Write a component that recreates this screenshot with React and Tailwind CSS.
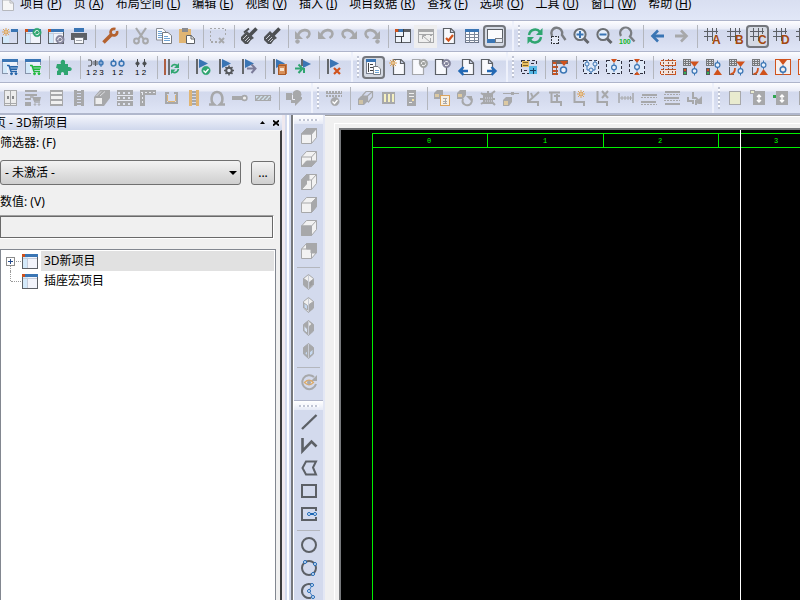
const GRAY = '#5c6066';
const DIM = '#a7a8aa';
const BLUE = '#3a75b4';
const ORANGE = '#d0521c';
const GREEN = '#2fa570';

// small drawing helpers, every icon sits on a 16x16 grid
const Box = ({ x, y, w, h, c = GRAY }) => (
  <rect x={x} y={y} width={w} height={h} fill={c} shapeRendering="crispEdges" />
);

const Frame = ({ x, y, w, h, c = GRAY, fill = 'none', dash, sw = 1 }) => (
  <rect
    x={x + sw / 2}
    y={y + sw / 2}
    width={w - sw}
    height={h - sw}
    fill={fill}
    stroke={c}
    strokeWidth={sw}
    strokeDasharray={dash}
    shapeRendering="crispEdges"
  />
);

const Line = ({ d, c = GRAY, w = 1, crisp, dash }) => (
  <path
    d={d}
    fill="none"
    stroke={c}
    strokeWidth={w}
    strokeDasharray={dash}
    shapeRendering={crisp ? 'crispEdges' : undefined}
  />
);

const Fill = ({ d, c = GRAY }) => <path d={d} fill={c} />;

const Ring = ({ x, y, r, c = GRAY, w = 1, fill = 'none' }) => (
  <circle cx={x} cy={y} r={r} fill={fill} stroke={c} strokeWidth={w} />
);

const Label = ({ x, y, size = 8, c = '#000', bold, children }) => (
  <text
    x={x}
    y={y}
    fontSize={size}
    fill={c}
    fontWeight={bold ? 700 : 400}
    fontFamily='"Liberation Sans", sans-serif'
  >
    {children}
  </text>
);

const Star = ({ x = 4, y = 4, c = '#dba45c' }) => (
  <g>
    <Line
      d={`M${x - 4} ${y}H${x + 4}M${x} ${y - 4}V${y + 4}M${x - 3} ${y - 3}L${x + 3} ${y + 3}M${x + 3} ${y - 3}L${x - 3} ${y + 3}`}
      c={c}
    />
    <Ring x={x} y={y} r={1.3} c={c} fill="#fff3dd" />
  </g>
);

const Badge = ({ x, y, c, children }) => (
  <g>
    <Ring x={x} y={y} r={4.2} c={c} fill={c} w={0.5} />
    {children || <Line d={`M${x - 2.2} ${y + 0.6}A2.2 2.2 0 0 1 ${x + 1.8} ${y - 1}M${x + 2.2} ${y}A2.2 2.2 0 0 1 ${x - 1.5} ${y + 1.6}`} c="#fff" />}
  </g>
);

const Win = ({ y = 1 }) => (
  <g>
    <Frame x={0} y={y} w={16} h={15 - y + 1} fill="#f2f4fb" />
    <Box x={1} y={y + 3} w={5} h={11 - y + 1} c="#d3e9fa" />
    <Box x={0} y={y} w={16} h={3} c={BLUE} />
    <Box x={0} y={y} w={3} h={3} c={ORANGE} />
    <Line d={`M5.5 ${y + 5}V15M1 ${y + 4.5}H15`} c="#c3cbda" crisp />
  </g>
);

const CartWin = ({ c }) => (
  <g>
    <Frame x={0} y={0} w={16} h={15} c="#8794ab" fill="#eef2fa" />
    <Box x={0} y={0} w={16} h={3} c={BLUE} />
    <Box x={1} y={4} w={4} h={10} c="#d3e9fa" />
    <Box x={6} y={6} w={10} h={10} c="#e4e9f7" />
    <Line d="M5 6.5H7L9 12.5H15" c={c} w={1.5} />
    <Fill d="M8 7H16L15 11H9Z" c={c} />
    <Line d="M10 8V10M12 8V10M14 8V10" c="#dceafa" w={0.7} />
    <Ring x={9.5} y={14.7} r={1} c={c} fill={c} />
    <Ring x={14} y={14.7} r={1} c={c} fill={c} />
  </g>
);

const Doc = ({ x = 3, c = GRAY }) => (
  <path
    d={`M${x + 0.5} 0.5H${x + 8}L${x + 11.5} 4V15.5H${x + 0.5}ZM${x + 7.5} 0.5V4.5H${x + 11.5}`}
    fill="#f8f9fd"
    stroke={c}
    strokeWidth="1.2"
  />
);

const Flag = () => (
  <g>
    <Box x={1} y={0} w={2} h={15} c="#65686c" />
    <Fill d="M4 0L13 4.5L4 9Z" c={BLUE} />
  </g>
);

const Brush = () => (
  <g>
    <Line d="M15.5 .5L9 7" c="#4a4d50" w={3.5} />
    <Fill d="M6 3L13 10L10 12L7 16H4L0 12V9Z" c="#505356" />
    <Line d="M2 11L6 7M4 13L8 9M6 14L9 11" c="#c9ccd2" />
  </g>
);

const Undo = ({ dot }) => (
  <g>
    <Line d="M3 8C4.5 .5 14.5 .5 14.5 6C14.5 8 13 9 11.5 10" c={DIM} w={2.6} />
    <Fill d="M0 3V11H8Z" c={DIM} />
    {dot && <Ring x={2.5} y={13.5} r={1.8} c={DIM} fill={DIM} />}
  </g>
);

const Flip = ({ children }) => <g transform="matrix(-1 0 0 1 16 0)">{children}</g>;

const Lens = ({ children }) => (
  <g>
    <Line d="M11 10.5L15.5 15" c="#63666b" w={3} />
    <Ring x={7} y={6.5} r={5.6} c="#6b6e72" w={2} fill="#e6effb" />
    {children}
  </g>
);

const Hash = ({ letter }) => (
  <g>
    <Line d="M3.5 0V13M8.5 0V13M0 3.5H14M0 8.5H8M12.5 0V6" crisp />
    <Label x={8} y={16} size={12} c="#a4490f" bold>{letter}</Label>
  </g>
);

// device symbols with orange contacts
const Coil = ({ x, y, c = BLUE }) => (
  <g>
    <Line d={`M${x} ${y - 4.5}V${y + 4.5}`} c={c} />
    <Ring x={x} y={y} r={2.4} c={c} fill="#e6effb" w={1.2} />
  </g>
);

const Device = ({ down, curve }) => (
  <g>
    <Frame x={0} y={0} w={8} h={7} c="#77797c" fill="#d9dce4" />
    <Line d="M0 2.5H8M0 4.5H8M2.5 0V7M5.5 0V7" c="#77797c" crisp />
    {curve ? (
      <g>
        <Line d="M.5 8V15.5H5" c={GRAY} crisp />
        <Line d="M1.5 15C5 15 6 12 6 9" c={ORANGE} w={1.8} />
      </g>
    ) : (
      <g>
        <Box x={0} y={9} w={4} h={7} c="#55585c" />
        <Box x={1} y={10} w={2} h={2} c={ORANGE} />
        <Box x={1} y={13} w={2} h={2} c="#35b254" />
      </g>
    )}
    {down ? (
      <g>
        <Coil x={11.5} y={6} />
        <Fill d="M7.5 16L11.5 10L16 16Z" c={ORANGE} />
      </g>
    ) : (
      <g>
        <Fill d="M7 2.5H16L11.5 8Z" c={ORANGE} />
        <Coil x={11.5} y={12} />
      </g>
    )}
  </g>
);

// face: which side of the cube is shaded
const Cube = ({ face }) => (
  <g stroke={DIM} strokeWidth="1" strokeLinejoin="round">
    <path d="M.5 6L5.5 .5H15.5V9.5L10.5 15.5H.5Z" fill="#f2f2f2" />
    {face === 'top' && <path d="M.5 6L5.5 .5H15.5L10.5 6Z" fill={DIM} />}
    {face === 'bottom' && <path d="M.5 15.5L5.5 10H15.5L10.5 15.5Z" fill={DIM} />}
    {face === 'left' && <path d="M.5 6L5.5 .5V10L.5 15.5Z" fill={DIM} />}
    {face === 'left' && <path d="M5.5 .5H8V6H5.5Z" fill={DIM} />}
    {face === 'right' && <path d="M10.5 6L15.5 .5V9.5L10.5 15.5Z" fill={DIM} />}
    {face === 'front' && <path d="M.5 6H10.5V15.5H.5Z" fill={DIM} />}
    {face === 'back' && <path d="M5.5 .5H15.5V10H10V6H5.5Z" fill={DIM} />}
    <path d="M.5 6H10.5L15.5 .5M10.5 6V15.5" fill="none" />
  </g>
);

const Iso = ({ side }) => (
  <g stroke={DIM} strokeWidth="1">
    <path d="M7.5 .5L12.5 4.5V11L7.5 15.5L2.5 11V4.5Z" fill={side < 2 ? '#f0f0f0' : DIM} />
    {side === 0 && <path d="M2.5 4.5L7.5 8V15L2.5 11Z" fill={DIM} />}
    {side === 0 && <path d="M8.5 8L12 5.5V10.5L8.5 14Z" fill="#9d9d9f" />}
    {side === 1 && <path d="M7.5 8L12.5 4.5V11L7.5 15Z" fill={DIM} />}
    {side === 1 && <path d="M3 6L6.5 8.5V13L3 10.5Z" fill="#c5d9f2" />}
    {side === 2 && <path d="M3 5.5L6.5 9V13.5L3 10.5Z" fill="#d8e4f5" />}
    {side === 2 && <path d="M7.5 1L11 4L7.5 7Z" fill="#eee" />}
    {side === 3 && <path d="M8.5 9L12 6V10.5L8.5 13.5ZM3.5 10L6.5 8V13Z" fill="#c5d9f2" />}
    <path d="M7.5 8V15M7.5 1V8" fill="none" stroke="#c8ccd6" />
  </g>
);

const Node = ({ x, y }) => <Ring x={x} y={y} r={1.5} c="#1c66b4" fill="#e8f2ff" />;

const DashBox = () => <Frame x={0} y={1} w={16} h={14} c="#2f3040" fill="#dfe9f8" dash="3 2" />;

const Rack = ({ c }) => (
  <g>
    <Box x={3} y={0} w={3} h={16} c={c} />
    <Box x={10} y={0} w={3} h={16} c={c} />
    <Line d="M6 1.5H10M6 4.5H10M6 7.5H10M6 10.5H10M6 13.5H10" c={DIM} w={2} crisp />
  </g>
);

const ICONS = {
  'new project': (
    <g>
      <Box x={1} y={8} w={6} h={7} c="#d3e9fa" />
      <Line d="M.5 9V15.5H15.5V3" crisp />
      <Box x={9} y={1} w={7} h={3} c={BLUE} />
      <Star />
    </g>
  ),
  'open project': <g><Win /><Badge x={12} y={4.5} c={GREEN} /></g>,
  'close project': <g><Win /><Badge x={12} y={11.5} c="#85859d" /></g>,
  print: (
    <g>
      <Box x={3} y={0} w={10} h={4} c={BLUE} />
      <Fill d="M0 5H16V12H13V9H3V12H0Z" c="#5d6065" />
      <Frame x={3} y={9} w={10} h={7} fill="#f8f9fc" c="#777b82" />
      <Box x={5} y={12} w={6} h={1} c="#a3a7af" />
    </g>
  ),
  settings: (
    <g>
      <Line d="M1.5 14.5L10 6" c="#b4622f" w={3.6} />
      <Line d="M13.5 1C9 0 7.5 4 9.5 6.5C12 8.5 16 7 15 3" c="#b4622f" w={2.6} />
    </g>
  ),
  cut: (
    <g>
      <Line d="M3 0L10.5 11M13 0L5.5 11" c={DIM} w={2.2} />
      <Ring x={3.5} y={13} r={2.4} c={DIM} w={2} />
      <Ring x={12.5} y={13} r={2.4} c={DIM} w={2} />
    </g>
  ),
  copy: (
    <g>
      <Fill d="M.5 .5H7L10 3V12H.5Z" c="#fbfcff" />
      <Line d="M.5 .5H6.5L9.5 3V12H.5Z" c="#8a8e96" />
      <Line d="M2 3.5H6M2 5.5H7M2 7.5H7M2 9.5H6" c="#6ea3d4" crisp />
      <Fill d="M7 4H12L16 7.5V16H7Z" c="#fff" />
      <Line d="M6.5 4.5H12L15.5 7.5V15.5H6.5Z" c="#777b82" />
      <Line d="M8 8.5H12M8 10.5H14M8 12.5H14" c="#6ea3d4" crisp />
    </g>
  ),
  paste: (
    <g>
      <Box x={0} y={1} w={12} h={14} c="#e0b574" />
      <Box x={3} y={0} w={6} h={4} c="#8a8b90" />
      <Fill d="M7 7H12L16 10V16H7Z" c="#fff" />
      <Line d="M7.5 7.5H12L15.5 10.5V15.5H7.5ZM12 7V11H16" />
    </g>
  ),
  'delete area': (
    <g>
      <Line d="M.5 13V.5H15.5V8" c={DIM} dash="2 2" crisp />
      <Box x={1} y={13} w={2} h={2} c={DIM} />
      <Box x={5} y={13} w={2} h={2} c={DIM} />
      <Line d="M9 10L14 15M14 10L9 15" c={DIM} w={2} />
    </g>
  ),
  'copy format': <g><Brush /><Line d="M3 4.5L8 .5" c="#4a4d50" w={2} /></g>,
  'assign format': <Brush />,
  'undo list': <Undo dot />,
  undo: <Undo />,
  redo: <Flip><Undo /></Flip>,
  'redo list': <Flip><Undo dot /></Flip>,
  workspace: (
    <g>
      <Frame x={0} y={1} w={16} h={14} fill="#eef3fa" />
      <Box x={0} y={1} w={16} h={3} />
      <Box x={0} y={1} w={3} h={3} c={ORANGE} />
      <Box x={4} y={1} w={4} h={3} c={BLUE} />
      <Line d="M8.5 1V8.5H0M6.5 9V15" c="#3c3f44" crisp />
    </g>
  ),
  fullscreen: (
    <g>
      <Frame x={0} y={1} w={16} h={14} c={DIM} fill="#efefef" />
      <Box x={0} y={1} w={16} h={3} c={DIM} />
      <Line d="M0 6.5H16M5 8L12 14M8 7.5H4.5V11M12.5 10V14.5H9M12 7.5H14" c={DIM} />
    </g>
  ),
  'check page': <g><Doc x={2} /><Line d="M5 10L7.5 12.5L12 7" c={ORANGE} w={2.2} /></g>,
  table: (
    <g>
      <Frame x={1} y={1} w={14} h={14} fill="#fbfcff" c="#6b7488" />
      <Box x={1} y={1} w={14} h={3} c={BLUE} />
      <Line d="M1 6.5H15M1 9.5H15M1 12.5H15M5.5 4V15M10.5 4V15" c="#7c8799" crisp />
    </g>
  ),
  'graphical preview': (
    <g>
      <Frame x={0} y={1} w={16} h={13} fill="#fafbfd" />
      <Box x={0} y={11} w={9} h={4} c={BLUE} />
      <Frame x={8} y={10} w={8} h={5} c="#777b82" fill="#e9edf4" />
    </g>
  ),
  refresh: (
    <g>
      <Line d="M2 7C3 1 10 0 13 4" c={GREEN} w={2.4} />
      <Fill d="M15.5 0V7H9Z" c={GREEN} />
      <Line d="M14 9C13 15 6 16 3 12" c={GREEN} w={2.4} />
      <Fill d="M.5 16V9H7Z" c={GREEN} />
    </g>
  ),
  'zoom area': (
    <g>
      <Line d="M2 8A5.5 5.5 0 1 1 12 7L15.5 12" c="#7a7d82" w={2.4} />
      <Frame x={1} y={8} w={8} h={8} c="#33363b" fill="#e4e9f6" dash="2 1" />
    </g>
  ),
  'zoom in': <Lens><Line d="M3.5 6.5H10.5M7 3V10" c={BLUE} w={2} /></Lens>,
  'zoom out': <Lens><Line d="M3.5 6.5H10.5" c={BLUE} w={2} /></Lens>,
  'zoom 100': (
    <g>
      <Line d="M2 8A5.5 5.5 0 1 1 11 8.5L15.5 13.5" c="#7a7d82" w={2.4} />
      <Label x={0} y={16} size={7} c="#12b52a" bold>100</Label>
    </g>
  ),
  back: <g><Line d="M3 8H14" c={BLUE} w={3} /><Line d="M8 2.5L2.5 8L8 13.5" c={BLUE} w={2.6} /></g>,
  forward: <Flip><Line d="M3 8H14" c={DIM} w={3} /><Line d="M8 2.5L2.5 8L8 13.5" c={DIM} w={2.6} /></Flip>,
  'grid A': <Hash letter="A" />,
  'grid B': <Hash letter="B" />,
  'grid C': <Hash letter="C" />,
  'grid D': <Hash letter="D" />,
  'grid E': <Hash letter="E" />,

  'parts list': <CartWin c="#2463a8" />,
  'parts import': <CartWin c="#1fb83b" />,
  'add-ons': (
    <Fill
      d="M1 5H5C3 0 10 -1 9 4V5H12V8C17 7 17 13 12 12V16H8C9 12 4 12 5 16H1V12C3 12 3 9 0 9Z"
      c={GREEN}
    />
  ),
  'number all': (
    <g>
      <Line d="M1 1H3C5.5 1 5.5 7 3 7H1M6 3H11M6 5H11M8.5 1V7" c="#55585c" w={1.2} />
      <Line d="M14 0V8" c={BLUE} />
      <Ring x={14} y={4} r={2} c={BLUE} w={1.4} />
      <Label x={-1} y={16}>1 2 3</Label>
    </g>
  ),
  'number online': (
    <g>
      <Line d="M3.5 0V3M11.5 0V3" c={BLUE} />
      <Ring x={3.5} y={4.5} r={2.4} c={BLUE} w={1.5} />
      <Ring x={11.5} y={4.5} r={2.4} c={BLUE} w={1.5} />
      <Label x={2} y={16}>1 2</Label>
    </g>
  ),
  'number offline': (
    <g>
      <Line d="M4.5 0V8M11.5 0V8" c="#4a4d50" />
      <Ring x={4.5} y={4.5} r={1.6} c="#4a4d50" fill="#4a4d50" />
      <Ring x={11.5} y={4.5} r={1.6} c="#4a4d50" fill="#4a4d50" />
      <Label x={2} y={16}>1 2</Label>
    </g>
  ),
  'update connections': (
    <g>
      <Box x={0} y={0} w={2} h={16} c="#ad5f43" />
      <Box x={4} y={0} w={2} h={16} c="#6b6e72" />
      <Line d="M7.5 8C8 5 12 5 14 7M14.5 10C13 15 9 14 7.5 12" c={GREEN} w={1.6} />
      <Fill d="M15 4V9H10ZM7 15V10.5H11.5Z" c={GREEN} />
    </g>
  ),
  'check project': <g><Flag /><Badge x={11} y={11.5} c={GREEN}><Line d="M8.5 11.5L10.5 13.5L13.5 10" c="#fff" w={1.4} /></Badge></g>,
  'check settings': (
    <g>
      <Flag />
      <Ring x={11} y={11.5} r={2.8} c="#55585c" w={2} fill="#e4e9f6" />
      <Line d="M11 6.5V8M11 15V16.5M6 11.5H8M14 11.5H16M7.5 8L9 9.5M14.5 8L13 9.5M7.5 15L9 13.5M14.5 15L13 13.5" c="#55585c" w={1.5} />
    </g>
  ),
  'next message': <g><Flag /><Line d="M6 9.5H14M10.5 5.5L14.5 9.5L10.5 14" c="#7c7c99" w={2} /></g>,
  'message management': (
    <g>
      <Flag />
      <Box x={7} y={5} w={8} h={10} c="#c77842" />
      <Frame x={6} y={6} w={8} h={10} c="#a85b29" fill="#d98f58" />
      <Box x={8} y={9} w={4} h={3} c="#f7e3cf" />
    </g>
  ),
  'go to message': (
    <g>
      <Box x={6} y={0} w={2} h={7} c="#65686c" />
      <Fill d="M8 1L16 5L8 9Z" c={BLUE} />
      <Line d="M0 9.5H6M3.5 5.5L7.5 9.5L3.5 14M9 9V14" c={GREEN} w={2} />
    </g>
  ),
  'delete messages': <g><Flag /><Line d="M8 9L14 15M14 9L8 15" c={ORANGE} w={2.2} /></g>,

  'page navigator': (
    <g>
      <Frame x={0} y={0} w={10} h={15} fill="#fafbff" c="#7a8191" />
      <Box x={0} y={0} w={10} h={3} c={BLUE} />
      <Line d="M2.5 4V13M4 5.5H7M4 8.5H7M4 11.5H7" c="#444" crisp />
      <Fill d="M7 7H12L15 10V16H7Z" c="#fff" />
      <Line d="M7.5 7.5H12L14.5 10V15.5H7.5Z" c="#777b82" />
      <Line d="M9 11.5H13M9 13.5H13" c="#6ea3d4" crisp />
    </g>
  ),
  'new page': <g><Doc x={4} /><Star /></g>,
  'open page': <g><Doc x={0} c="#a5a7ab" /><Badge x={11.5} y={4.5} c="#a0a2a0" /></g>,
  'close page': <g><Doc x={0} /><Badge x={11.5} y={4.5} c="#85859d" /></g>,
  'previous page': (
    <g>
      <Doc x={4} />
      <Line d="M1.5 12H10M5.5 8L1.5 12L5.5 16" c="#2369b5" w={2.4} />
    </g>
  ),
  'next page': (
    <g>
      <Doc x={0} />
      <Line d="M6 12H14.5M10.5 8L14.5 12L10.5 16" c="#2369b5" w={2.4} />
    </g>
  ),
  'insert macro': (
    <g>
      <Frame x={0} y={1} w={16} h={14} c="#2f3040" dash="3 2" />
      <Box x={1} y={2} w={7} h={6} c="#e8bf62" />
      <Line d="M2 3.5H7M2 6.5H7" c="#7f642c" crisp />
      <Box x={8} y={7} w={8} h={8} c="#55b7e4" />
      <Line d="M9 11.5H15M12 8.5V14.5" c="#143c5c" crisp />
      <Line d="M10 4.5H13M3 11.5H6" c="#2f3040" crisp />
    </g>
  ),
  'mounting panel': (
    <g>
      <Box x={0} y={1} w={16} h={4} c="#66696d" />
      <Line d="M0 3.5H5M0 7.5H6M0 11.5H6M0 14.5H6" c={ORANGE} w={2} crisp />
      <Line d="M.5 1V16M4 1V16" c="#7c6157" crisp />
      <Fill d="M8 2H16L12 7Z" c={ORANGE} />
      <Ring x={11.5} y={11} r={3} c={BLUE} w={1.5} fill="#e8f1fb" />
    </g>
  ),
  'device group': (
    <g>
      <DashBox />
      <Ring x={4} y={5} r={2} c={BLUE} />
      <Ring x={12} y={5} r={2} c={BLUE} />
      <Ring x={8} y={11} r={2} c={BLUE} />
      <Line d="M4 1V3M12 1V3M4 7V11H6M12 7V11H10M8 13V15" c={BLUE} />
    </g>
  ),
  'device top': <g><DashBox /><Fill d="M5 0H11L8 4Z" c={ORANGE} /><Coil x={8} y={8.5} /></g>,
  'device both': <g><DashBox /><Fill d="M5 0H11L8 4ZM5 16H11L8 12.5Z" c={ORANGE} /><Coil x={8} y={8} /></g>,
  terminals: (
    <g>
      <Frame x={0} y={1} w={16} h={6} c={ORANGE} dash="3 1" fill="#f3e3dc" />
      <Frame x={0} y={10} w={16} h={6} c={ORANGE} dash="3 1" fill="#f3e3dc" />
      <Line d="M3.5 0V16M8 0V16M12.5 0V16" c="#8b5a45" dash="2 1" crisp />
    </g>
  ),
  'lamp top': <Device />,
  'lamp bottom': <Device down />,
  'curve top': <Device curve />,
  'curve bottom': <Device curve down />,
  'boxed device': (
    <g>
      <Frame x={0} y={0} w={16} h={16} c={ORANGE} fill="#f5efee" />
      <Fill d="M4 1H12L8 6Z" c={ORANGE} />
      <Ring x={8} y={10.5} r={2.8} c={BLUE} w={1.5} />
      <Line d="M8 6V8M8 13V16" c={BLUE} />
    </g>
  ),
  'boxed contact': (
    <g>
      <Frame x={0} y={0} w={16} h={16} c={ORANGE} fill="#f5efee" />
      <Coil x={8} y={8} />
    </g>
  ),

  cabinet: (
    <g>
      <Frame x={2} y={0} w={13} h={16} c={DIM} fill="#ececec" />
      <Line d="M8.5 1V15M2 13.5H15" c={DIM} crisp />
      <Box x={5} y={6} w={2} h={3} c="#87888a" />
      <Box x={10} y={6} w={2} h={3} c="#87888a" />
    </g>
  ),
  'place part': (
    <g>
      <Line d="M0 1H12M0 5H12M0 9H6M0 13H6M0 15H6" c={DIM} w={2} crisp />
      <Line d="M5 7H8L10 12H15" c={DIM} w={1.5} />
      <Fill d="M8 7H16L15 11H9Z" c={DIM} />
      <Ring x={10} y={14.5} r={0.8} c={DIM} />
      <Ring x={14} y={14.5} r={0.8} c={DIM} />
    </g>
  ),
  'mounting plate': (
    <g>
      <Frame x={2} y={0} w={13} h={16} c={DIM} fill="#f0f0f0" />
      <Line d="M2 1H15M2 5H15M2 10H15M2 15H15" c={DIM} w={2} crisp />
    </g>
  ),
  'mounting rail': <Rack c={DIM} />,
  enclosure: (
    <g>
      <Fill d="M0 7L6 0H16V8L10 16H0Z" c={DIM} />
      <Fill d="M1.5 8H8V14H1.5Z" c="#ededed" />
      <Line d="M2.5 6L7 1.5M6 6L11 1.5" c="#dcdde0" />
    </g>
  ),
  'perforated plate': (
    <g>
      <Box x={0} y={0} w={16} h={16} c={DIM} />
      <Line d="M1 2.5H16M1 8H16M1 13.5H16" c="#dfe3ef" w={2} dash="2 3" crisp />
      <Line d="M0 5.5H16M0 10.5H16" c="#e6e9f2" crisp />
    </g>
  ),
  'corner profile': (
    <g>
      <Fill d="M0 0H16V5H5V16H0Z" c={DIM} />
      <Line d="M1 2.5H16M2.5 3V15" c="#e6e8ef" dash="2 2" />
    </g>
  ),
  'open profile': (
    <g>
      <Line d="M6 3H3V13H14V3H11" c={DIM} w={2} crisp />
      <Line d="M5 11.5H12M4.5 5V11M12.5 5V11" c="#e0b574" crisp />
    </g>
  ),
  'wire duct': <Rack c="#e0b574" />,
  'omega rail': <Line d="M0 14.5H5C1 11 2 2 8 2C14 2 15 11 11 14.5H16" c={DIM} w={2.6} />,
  busbar: (
    <g>
      <Box x={0} y={6} w={12} h={4} c={DIM} />
      <Ring x={12.5} y={8} r={2.4} c={DIM} w={1.6} fill="#ededed" />
    </g>
  ),
  'cable duct': (
    <g>
      <Frame x={0} y={5} w={16} h={6} c={DIM} fill="#cfe0ea" />
      <Line d="M1 10L5 6M5 10L9 6M9 10L13 6M13 10L16 7" c={DIM} w={1.6} />
    </g>
  ),
  group: (
    <g>
      <Fill d="M0 3H6V10H0ZM6 7H16V9L9 16V13H5V8Z" c={DIM} />
      <Ring x={11} y={4.5} r={4} c={DIM} fill={DIM} />
      <Line d="M6.5 5V9.5H9" c="#ededf4" />
    </g>
  ),
  'check rail': (
    <g>
      <Line d="M0 1.5H16M0 5.5H16" c={DIM} w={2} dash="2 1" crisp />
      <Line d="M0 3.5H16" c={DIM} crisp />
      <Badge x={9} y={11.5} c={DIM}><Line d="M6.5 11.5L8.5 13.5L11.5 10" c="#fff" w={1.3} /></Badge>
    </g>
  ),
  'part solid': (
    <g>
      <Line d="M5 6L9 1.5H15.5V7L11 12.5M5.5 6H10.5L15.5 1.5M10.5 6V12" c={DIM} w={1.2} />
      <Fill d="M1 9L4 6H10V12L7 15H1Z" c={DIM} />
      <Box x={2} y={10} w={4} h={4} c="#cfc2a5" />
    </g>
  ),
  'part bars': (
    <g>
      <Box x={2} y={2} w={13} h={12} c={DIM} />
      <Box x={4} y={4} w={2} h={8} c="#f5f0c0" />
      <Box x={8} y={4} w={2} h={8} c="#f5f0c0" />
      <Box x={12} y={4} w={2} h={8} c="#f5f0c0" />
    </g>
  ),
  'server rack': (
    <g>
      <Box x={4} y={0} w={9} h={16} c={DIM} />
      <Line d="M6 3.5H11M6 6.5H11M6 12.5H9" c="#eee" crisp />
      <Box x={9} y={9} w={2} h={2} c="#f3dca4" />
    </g>
  ),
  'duplicate part': (
    <g>
      <Fill d="M0 3L3 0H9V6L6 9H0Z" c={DIM} />
      <Box x={1} y={4} w={4} h={3} c="#dcc9a2" />
      <Frame x={6} y={5} w={10} h={11} c="#dba45c" fill="#f7efe2" />
      <Line d="M9 8.5H13M9 11.5H13M9 13.5H13M11.5 8V14" c={DIM} crisp />
    </g>
  ),
  'rotate part': (
    <g>
      <Fill d="M0 3L3 0H9V5L6 9H0Z" c={DIM} />
      <Box x={1} y={4} w={4} h={3} c="#dcc9a2" />
      <Line d="M6 9C4 14 10 17 13.5 14C16 11 15 8 13 7" c={DIM} w={2} />
      <Fill d="M9 6H15V12Z" c={DIM} />
    </g>
  ),
  'part handles': (
    <g>
      <Box x={3} y={3} w={10} h={11} c={DIM} />
      <Line d="M1 3L4 5M15 1L10 5M1 14L4 12M15 15L12 12M8 1V5M0 9H4M12 9H15" c={DIM} w={2} />
      <Line d="M5 8H12M5 11H12" c="#d5d9e8" dash="1 1" />
    </g>
  ),
  'place on line': (
    <g>
      <Line d="M0 3.5H16" c={DIM} crisp />
      <Box x={8} y={2} w={3} h={3} c={DIM} />
      <Fill d="M0 10L3 7H9V12L6 16H0Z" c={DIM} />
      <Box x={1} y={11} w={4} h={4} c="#dcc9a2" />
    </g>
  ),
  'axis check': <g><Line d="M2 1V12H12V16M3 11L13 2M5 3L7 8" c={DIM} w={2} /></g>,
  'axis lift': <g><Line d="M0 2.5H11M2.5 2V12H12V16M8 4V12M5 6H11" c={DIM} w={2} /></g>,
  'axis new': <g><Line d="M2.5 1V12H12V16" c={DIM} w={2} /><Star x={9} y={4} /></g>,
  'axis delete': <g><Line d="M2.5 1V12H12V16M7 1L13 8M13 1L7 8" c={DIM} w={2} /></g>,
  distance: <g><Line d="M1 3V13M15 3V13" c={DIM} w={1.5} /><Line d="M2 8H14M4 6V10M7 6V10M10 6V10M12.5 6V10" c={DIM} /></g>,
  'align rows': <g><Line d="M1 5H16M0 12H15" c={DIM} w={2} crisp /><Line d="M0 7.5H16M0 14.5H16" c={DIM} dash="2 1" crisp /></g>,
  'space rows': <g><Line d="M1 2H16M0 8H15M1 14H16" c={DIM} w={2} crisp /><Line d="M0 4.5H16M0 10.5H16" c={DIM} dash="2 1" crisp /></g>,
  'move axis': <g><Line d="M1 7V11H6V14M6 2V8H9L12 11M9 15V10" c={DIM} w={2} /><Fill d="M8 13L15 6V14H12Z" c={DIM} /></g>,
  'surface view': <Frame x={2} y={1} w={12} h={14} c={DIM} fill="#e9ebcf" />,
  'handle top': (
    <g>
      <Box x={3} y={1} w={12} h={14} c={DIM} />
      <Frame x={0} y={0} w={5} h={4} c={DIM} fill="#e9ebcf" />
      <Line d="M9 5V12M7 7L9 5L11 7M7 10L9 12L11 10" c="#fff" w={1.4} />
    </g>
  ),
  'handle middle': (
    <g>
      <Box x={3} y={1} w={12} h={14} c={DIM} />
      <Box x={0} y={5} w={3} h={3} c="#2fa550" />
      <Line d="M9 5V12M7 7L9 5L11 7M7 10L9 12L11 10" c="#fff" w={1.4} />
    </g>
  ),
  'handle bottom': <Box x={3} y={1} w={12} h={14} c={DIM} />,

  'view top': <Cube face="top" />,
  'view bottom': <Cube face="bottom" />,
  'view left': <Cube face="left" />,
  'view right': <Cube face="right" />,
  'view front': <Cube face="front" />,
  'view back': <Cube face="back" />,
  'isometric SW': <Iso side={0} />,
  'isometric SE': <Iso side={1} />,
  'isometric NE': <Iso side={2} />,
  'isometric NW': <Iso side={3} />,
  'rotate view': (
    <g>
      <Line d="M13 3A7 7 0 1 0 15 10" c={DIM} w={2} />
      <Fill d="M16 1V7H10Z" c={DIM} />
      <path d="M3.5 8.5Q8 4 12.5 8.5Q8 13 3.5 8.5Z" fill="#f4eee6" stroke="#dba866" strokeWidth="1.2" />
      <Ring x={8} y={8.5} r={1.6} c={DIM} fill={DIM} />
    </g>
  ),
  line: <Line d="M1 15L15.5 1" w={2.4} />,
  polyline: <Line d="M1.5 1V14L10.5 4.5L15.5 9.5" w={2.6} />,
  polygon: <Line d="M5 1.5H15L12 7.5L15 14.5H5L1.5 8Z" w={2} />,
  rectangle: <Frame x={0} y={1} w={16} h={14} sw={2} />,
  'rectangle centre': (
    <g>
      <Line d="M15 5V2H1V14H15V11" w={2} crisp />
      <Line d="M8 8H14" c="#1c66b4" w={2} />
      <Node x={8} y={8} />
      <Node x={14} y={8} />
    </g>
  ),
  circle: <Ring x={8} y={8} r={7} w={2} />,
  'circle points': (
    <g>
      <Ring x={8} y={8} r={7} w={2} />
      <Node x={4} y={2} />
      <Node x={14} y={4} />
      <Node x={12} y={14} />
    </g>
  ),
  arc: (
    <g>
      <Line d="M10 1.3A7 7 0 1 0 10 14.7" w={2} />
      <Line d="M11 2L8 8L12 14" c="#1c66b4" w={0.8} />
      <Node x={11} y={2} />
      <Node x={8} y={8} />
      <Node x={12} y={14} />
    </g>
  ),
};

// '|' is a separator, '#' starts the next toolbar
const TOOLBARS = [
  [
    'new project', 'open project', 'close project', 'print', '|', 'settings', '|', 'cut', 'copy', 'paste', '|',
    'delete area', '|', 'copy format', 'assign format', '|', 'undo list', 'undo', 'redo', 'redo list', '|',
    'workspace', 'fullscreen', 'check page', 'table', 'graphical preview', '#',
    'refresh', 'zoom area', 'zoom in', 'zoom out', 'zoom 100', '|', 'back', 'forward', '|',
    'grid A', 'grid B', 'grid C', 'grid D', 'grid E',
  ],
  [
    'parts list', 'parts import', '|', 'add-ons', '|', 'number all', 'number online', 'number offline', '|',
    'update connections', '|', 'check project', 'check settings', 'next message', '|',
    'message management', 'go to message', '|', 'delete messages', '#',
    'page navigator', 'new page', 'open page', 'close page', 'previous page', 'next page', '#',
    'insert macro', '|', 'mounting panel', '|', 'device group', 'device top', 'device both', '|',
    'terminals', 'lamp top', 'lamp bottom', 'curve top', 'curve bottom', 'boxed device', 'boxed contact',
  ],
  [
    'cabinet', 'place part', 'mounting plate', 'mounting rail', 'enclosure', 'perforated plate', 'corner profile',
    'open profile', 'wire duct', 'omega rail', 'busbar', 'cable duct', '|', 'group', '#',
    'check rail', '|', 'part solid', 'part bars', 'server rack', '|',
    'duplicate part', 'rotate part', 'part handles', 'place on line', 'axis check', 'axis lift', 'axis new',
    'axis delete', 'distance', 'align rows', 'space rows', 'move axis', '#',
    'surface view', 'handle top', 'handle middle', 'handle bottom',
  ],
];

const VIEW_TOOLS = [
  'view top', 'view bottom', 'view left', 'view right', 'view front', 'view back', '|',
  'isometric SW', 'isometric SE', 'isometric NE', 'isometric NW', '|', 'rotate view',
];

const DRAW_TOOLS = [
  'line', 'polyline', 'polygon', 'rectangle', 'rectangle centre', '|', 'circle', 'circle points', 'arc',
];

const PRESSED = ['graphical preview', 'grid C', 'page navigator'];

const MENU = [
  ['项目', 'P'], ['页', 'A'], ['布局空间', 'L'], ['编辑', 'E'], ['视图', 'V'], ['插入', 'I'],
  ['项目数据', 'R'], ['查找', 'F'], ['选项', 'O'], ['工具', 'U'], ['窗口', 'W'], ['帮助', 'H'],
];

function Icon({ name }) {
  return (
    <svg viewBox="0 0 16 16" className="block h-4 w-4 shrink-0 overflow-visible" aria-hidden="true">
      {ICONS[name]}
    </svg>
  );
}

function ToolButton({ name }) {
  let look = 'hover:bg-white/50';
  if (PRESSED.includes(name)) {
    look = 'rounded-sm bg-[#d5dae4] inset-ring-2 inset-ring-[#74777d]';
  } else if (name === 'fullscreen') {
    look = 'bg-[#eeeeef]';
  }
  return (
    <button type="button" aria-label={name} className={`flex h-[23px] w-[23px] shrink-0 items-center pl-1 ${look}`}>
      <Icon name={name} />
    </button>
  );
}

function Toolbar({ items }) {
  return (
    <div
      role="toolbar"
      className="flex h-[31px] shrink-0 items-center overflow-hidden border-t border-[#aeb4ca] bg-[linear-gradient(to_bottom,#fdfdff_0px,#e9ecf7_8px,#d2d9ed_9px,#d6dcef_18px,#dfe5f6_30px)]"
    >
      <div className="-ml-0.5 flex h-full items-center">
        {items.map((item, i) => {
          if (item === '|') {
            return <div key={i} className="mr-0.5 ml-[5px] h-[23px] w-px shrink-0 bg-[#b3b6bd]" />;
          }
          if (item === '#') {
            return (
              <div key={i} className="flex h-full w-[17px] shrink-0 items-center pl-1.5">
                <div className="h-full w-0.5 bg-[#eef1fb]" />
                <div className="ml-1 h-[22px] w-0.5 bg-[repeating-linear-gradient(to_bottom,#c0c5d4_0px_2px,#fbfcff_2px_4px)]" />
              </div>
            );
          }
          return <ToolButton key={i} name={item} />;
        })}
      </div>
    </div>
  );
}

function SideTools({ items }) {
  return (
    <div role="toolbar" className="flex flex-col items-center pb-[7px]">
      <div className="flex h-[9px] w-full items-center justify-center bg-gradient-to-b from-white to-[#e6eaf6]">
        <div className="h-0.5 w-5 bg-[repeating-linear-gradient(to_right,#c0c5d4_0px_2px,#fbfcff_2px_4px)]" />
      </div>
      {items.map((item, i) =>
        item === '|' ? (
          <div key={i} className="mt-[5px] mb-0.5 h-px w-[23px] bg-[#b3b6bd]" />
        ) : (
          <ToolButton key={i} name={item} />
        )
      )}
    </div>
  );
}

function MenuBar() {
  return (
    <nav className="flex h-5 shrink-0 items-start bg-gradient-to-b from-[#d9dff1] to-[#e1e7f7] pl-0.5 whitespace-nowrap">
      <svg viewBox="0 0 12 11" className="mr-1.5 h-[11px] w-3 shrink-0" aria-hidden="true">
        <path d="M.5 0V10.5H11.5V3L8 0Z" fill="#f6f6f6" stroke="#b6b8bd" />
        <path d="M8 0V3H11.5" fill="none" stroke="#b6b8bd" />
      </svg>
      <ul className="flex gap-3">
        {MENU.map(([label, key]) => (
          <li key={key}>
            <a href="#menu" className="block leading-2">
              {label} (<u>{key}</u>)
            </a>
          </li>
        ))}
      </ul>
    </nav>
  );
}

function TreeRow({ label, first }) {
  return (
    <li className="flex h-5 items-center">
      <div className="relative h-full w-5 shrink-0">
        <div className={`absolute top-0 left-[9px] border-l border-dotted border-[#9a9a9a] ${first ? 'mt-3.5 h-1.5' : 'h-2.5'}`} />
        <div className="absolute top-2.5 right-0 left-2.5 border-t border-dotted border-[#9a9a9a]" />
        {first && (
          <button type="button" aria-label="expand" className="absolute top-1.5 left-[5px] h-[9px] w-[9px] bg-white">
            <svg viewBox="0 0 9 9" className="block h-[9px] w-[9px]" aria-hidden="true">
              <Frame x={0} y={0} w={9} h={9} c="#8c8c8c" />
              <Line d="M2 4.5H7M4.5 2V7" c="#234a8c" crisp />
            </svg>
          </button>
        )}
      </div>
      <svg viewBox="0 0 16 16" className="ml-px h-4 w-4 shrink-0" aria-hidden="true">
        <Win />
      </svg>
      <span className={`ml-[3px] flex h-full flex-1 items-center pl-[3px] ${first ? 'bg-[#e1e1e1]' : ''}`}>{label}</span>
    </li>
  );
}

function PagePanel() {
  return (
    <aside className="flex w-[282px] shrink-0 flex-col">
      <header className="flex h-[15px] shrink-0 items-center bg-gradient-to-b from-[#f4f6fc] to-[#cfd7ec]">
        <h2 className="-ml-1.5 flex-1 leading-3">页 - 3D新项目</h2>
        <button type="button" aria-label="collapse" className="mr-2">
          <svg viewBox="0 0 5 3" className="h-[3px] w-[5px]" aria-hidden="true">
            <path d="M0 3L2.5 0L5 3Z" />
          </svg>
        </button>
        <button type="button" aria-label="close" className="mr-[3px]">
          <svg viewBox="0 0 6 6" className="h-1.5 w-1.5" aria-hidden="true">
            <path d="M0 .5L6 5.5M6 .5L0 5.5" stroke="#000" strokeWidth="1.8" />
          </svg>
        </button>
      </header>
      <form className="flex min-h-0 flex-1 flex-col border-t border-r-2 border-t-[#f8f8f8] border-r-[#3c3c3c] bg-[#f0f0f0] pr-1">
        <label htmlFor="filter" className="mt-1 block leading-4">
          筛选器: (F)
        </label>
        <div className="mt-[9px] flex items-center gap-2.5">
          <div className="relative flex-1">
            <select
              id="filter"
              className="block h-[25px] w-full appearance-none rounded-[3px] border border-[#707070] bg-gradient-to-b from-[#f3f3f3] to-[#cfcfcf] pl-1"
            >
              <option>- 未激活 -</option>
            </select>
            <svg viewBox="0 0 8 4" className="pointer-events-none absolute top-[11px] right-1 h-1 w-2" aria-hidden="true">
              <path d="M0 0H8L4 4Z" />
            </svg>
          </div>
          <button
            type="button"
            className="mr-px h-6 w-6 rounded-[3px] border border-[#707070] bg-gradient-to-b from-[#f3f3f3] to-[#cfcfcf] leading-5"
          >
            ...
          </button>
        </div>
        <label htmlFor="value" className="mt-[9px] block leading-4">
          数值: (V)
        </label>
        <div className="mt-[5px] mr-0.5 border-t border-r border-b border-t-[#a0a0a0] border-r-white border-b-white">
          <input id="value" className="block h-[22px] w-full border border-[#696969] bg-[#f0f0f0]" />
        </div>
        <ul className="mt-2.5 min-h-0 flex-1 border border-b-0 border-[#828790] bg-white py-px pr-px">
          <TreeRow label="3D新项目" first />
          <TreeRow label="插座宏项目" />
        </ul>
      </form>
    </aside>
  );
}

function Drawing() {
  return (
    <svg className="block h-full w-full bg-black" aria-label="drawing sheet">
      <path
        d="M31.5 4000V3.5H4000M31 17.5H4000M146.5 3V18M262.5 3V18M377.5 3V18"
        fill="none"
        stroke="#00f000"
        shapeRendering="crispEdges"
      />
      <g fill="#00ff00" fontSize="7" fontFamily='"Liberation Mono", monospace' textAnchor="middle">
        {[88, 204, 319, 435].map((x, i) => (
          <text key={x} x={x} y="13">
            {i}
          </text>
        ))}
      </g>
      <path d="M399.5 0V4000" stroke="#fff" shapeRendering="crispEdges" />
    </svg>
  );
}

export default function App() {
  return (
    <div className="flex h-screen flex-col overflow-hidden bg-[#dfe5f6] font-['Noto_Sans','Noto_Sans_CJK_SC',sans-serif] text-xs text-black">
      <MenuBar />
      {TOOLBARS.map((items, i) => (
        <Toolbar key={i} items={items} />
      ))}
      <main className="flex min-h-0 flex-1 border-t-2 border-[#b0b7cc]">
        <PagePanel />
        <div className="flex w-[11px] shrink-0 border-r-2 border-[#77797c] bg-[#d3daed]">
          <div className="w-[3px] bg-[#f0e9ee]" />
          <div className="w-0.5 bg-[#d3daed]" />
          <div className="w-0.5 bg-white" />
        </div>
        <div className="flex w-8 shrink-0 flex-col overflow-hidden border-r-2 border-l border-r-[#e3e7f4] border-l-white bg-[#d3daed]">
          <SideTools items={VIEW_TOOLS} />
          <div className="border-t border-[#aeb4ca]">
            <SideTools items={DRAW_TOOLS} />
          </div>
        </div>
        <section className="min-w-0 flex-1 border-t border-[#a0a0a0] bg-[#f0f0f0]">
          <div className="h-full border-t border-white pt-1.5 pl-[9px]">
            <div className="h-full border-t border-l border-white pt-1 pl-1">
              <div className="h-full border-t-2 border-l-2 border-[#77797c]">
                <Drawing />
              </div>
            </div>
          </div>
        </section>
      </main>
    </div>
  );
}
